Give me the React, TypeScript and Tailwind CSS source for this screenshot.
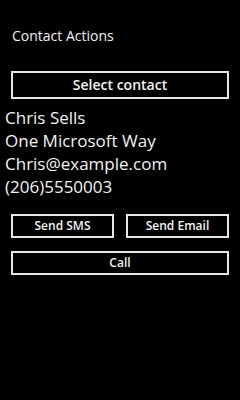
import React from 'react';

const font = { fontFamily: '"Open Sans", "Noto Sans", Arial, sans-serif' };

function OutlineButton({ label, className = '' }: { label: string; className?: string }) {
  return (
    <button
      className={`flex items-center justify-center border-2 border-[#e6e6e6] bg-black text-[#f2f2f2] font-semibold ${className}`}
    >
      {label}
    </button>
  );
}

export default function App() {
  const contact = ['Chris Sells', 'One Microsoft Way', 'Chris@example.com', '(206)5550003'];

  return (
    <div className="w-[240px] h-[400px] bg-black text-[#f2f2f2] overflow-hidden" style={font}>
      <div className="pt-[26px] pl-[12px] text-[14px] leading-[19px]">Contact Actions</div>

      <div className="pt-[26px] px-[11px]">
        <OutlineButton label="Select contact" className="w-full h-[28px] text-[14px] leading-none" />
      </div>

      <div className="pt-[7px] pl-[5px] text-[17px] leading-[23px]">
        {contact.map(line => (
          <div key={line}>{line}</div>
        ))}
      </div>

      <div className="pt-[16px] px-[11px] flex flex-col gap-[13px]">
        <div className="flex gap-[12px]">
          <OutlineButton label="Send SMS" className="flex-1 h-[24px] text-[12px] leading-none" />
          <OutlineButton label="Send Email" className="flex-1 h-[24px] text-[12px] leading-none" />
        </div>
        <OutlineButton label="Call" className="w-full h-[24px] text-[12px] leading-none" />
      </div>
    </div>
  );
}
